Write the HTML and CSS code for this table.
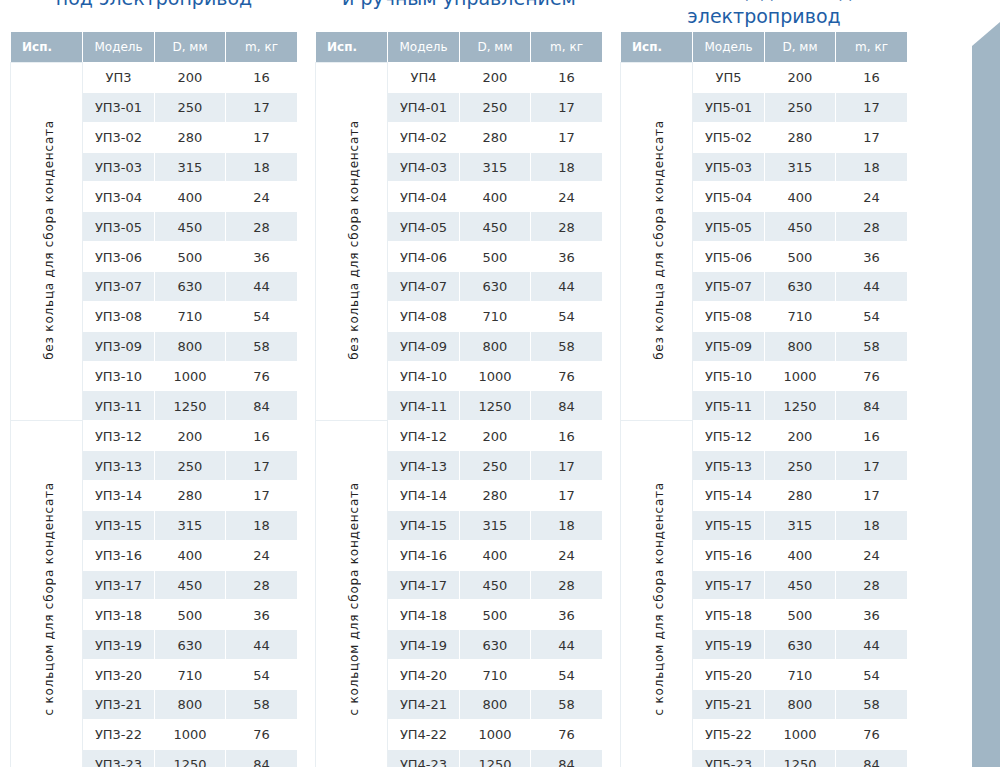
FILE: index.html
```html
<!DOCTYPE html>
<html lang="ru">
<head>
<meta charset="utf-8">
<title>Узлы прохода</title>
<link rel="stylesheet" href="styles.css">
</head>
<body>
<div class="deco"></div>
<main class="cols">
  <section class="col">
    <h2 class="title title-up">Узел прохода УП3<br>под электропривод</h2>
    <table class="spec">
      <colgroup><col class="c1"><col class="c2"><col class="c3"><col class="c4"></colgroup>
      <thead><tr><th class="isp">Исп.</th><th>Модель</th><th>D, мм</th><th>m, кг</th></tr></thead>
      <tbody>
        <tr><td class="grp" rowspan="12"><span>без кольца для сбора конденсата</span></td><td>УП3</td><td>200</td><td>16</td></tr>
        <tr><td>УП3-01</td><td>250</td><td>17</td></tr>
        <tr><td>УП3-02</td><td>280</td><td>17</td></tr>
        <tr><td>УП3-03</td><td>315</td><td>18</td></tr>
        <tr><td>УП3-04</td><td>400</td><td>24</td></tr>
        <tr><td>УП3-05</td><td>450</td><td>28</td></tr>
        <tr><td>УП3-06</td><td>500</td><td>36</td></tr>
        <tr><td>УП3-07</td><td>630</td><td>44</td></tr>
        <tr><td>УП3-08</td><td>710</td><td>54</td></tr>
        <tr><td>УП3-09</td><td>800</td><td>58</td></tr>
        <tr><td>УП3-10</td><td>1000</td><td>76</td></tr>
        <tr><td>УП3-11</td><td>1250</td><td>84</td></tr>
        <tr><td class="grp" rowspan="12"><span>с кольцом для сбора конденсата</span></td><td>УП3-12</td><td>200</td><td>16</td></tr>
        <tr><td>УП3-13</td><td>250</td><td>17</td></tr>
        <tr><td>УП3-14</td><td>280</td><td>17</td></tr>
        <tr><td>УП3-15</td><td>315</td><td>18</td></tr>
        <tr><td>УП3-16</td><td>400</td><td>24</td></tr>
        <tr><td>УП3-17</td><td>450</td><td>28</td></tr>
        <tr><td>УП3-18</td><td>500</td><td>36</td></tr>
        <tr><td>УП3-19</td><td>630</td><td>44</td></tr>
        <tr><td>УП3-20</td><td>710</td><td>54</td></tr>
        <tr><td>УП3-21</td><td>800</td><td>58</td></tr>
        <tr><td>УП3-22</td><td>1000</td><td>76</td></tr>
        <tr><td>УП3-23</td><td>1250</td><td>84</td></tr>
      </tbody>
    </table>
  </section>
  <section class="col">
    <h2 class="title title-up">Узел прохода УП4 с клапаном<br>и ручным управлением</h2>
    <table class="spec">
      <colgroup><col class="c1"><col class="c2"><col class="c3"><col class="c4"></colgroup>
      <thead><tr><th class="isp">Исп.</th><th>Модель</th><th>D, мм</th><th>m, кг</th></tr></thead>
      <tbody>
        <tr><td class="grp" rowspan="12"><span>без кольца для сбора конденсата</span></td><td>УП4</td><td>200</td><td>16</td></tr>
        <tr><td>УП4-01</td><td>250</td><td>17</td></tr>
        <tr><td>УП4-02</td><td>280</td><td>17</td></tr>
        <tr><td>УП4-03</td><td>315</td><td>18</td></tr>
        <tr><td>УП4-04</td><td>400</td><td>24</td></tr>
        <tr><td>УП4-05</td><td>450</td><td>28</td></tr>
        <tr><td>УП4-06</td><td>500</td><td>36</td></tr>
        <tr><td>УП4-07</td><td>630</td><td>44</td></tr>
        <tr><td>УП4-08</td><td>710</td><td>54</td></tr>
        <tr><td>УП4-09</td><td>800</td><td>58</td></tr>
        <tr><td>УП4-10</td><td>1000</td><td>76</td></tr>
        <tr><td>УП4-11</td><td>1250</td><td>84</td></tr>
        <tr><td class="grp" rowspan="12"><span>с кольцом для сбора конденсата</span></td><td>УП4-12</td><td>200</td><td>16</td></tr>
        <tr><td>УП4-13</td><td>250</td><td>17</td></tr>
        <tr><td>УП4-14</td><td>280</td><td>17</td></tr>
        <tr><td>УП4-15</td><td>315</td><td>18</td></tr>
        <tr><td>УП4-16</td><td>400</td><td>24</td></tr>
        <tr><td>УП4-17</td><td>450</td><td>28</td></tr>
        <tr><td>УП4-18</td><td>500</td><td>36</td></tr>
        <tr><td>УП4-19</td><td>630</td><td>44</td></tr>
        <tr><td>УП4-20</td><td>710</td><td>54</td></tr>
        <tr><td>УП4-21</td><td>800</td><td>58</td></tr>
        <tr><td>УП4-22</td><td>1000</td><td>76</td></tr>
        <tr><td>УП4-23</td><td>1250</td><td>84</td></tr>
      </tbody>
    </table>
  </section>
  <section class="col">
    <h2 class="title">Узел прохода УП5 с клапаном<br>и площадкой под<br>электропривод</h2>
    <table class="spec">
      <colgroup><col class="c1"><col class="c2"><col class="c3"><col class="c4"></colgroup>
      <thead><tr><th class="isp">Исп.</th><th>Модель</th><th>D, мм</th><th>m, кг</th></tr></thead>
      <tbody>
        <tr><td class="grp" rowspan="12"><span>без кольца для сбора конденсата</span></td><td>УП5</td><td>200</td><td>16</td></tr>
        <tr><td>УП5-01</td><td>250</td><td>17</td></tr>
        <tr><td>УП5-02</td><td>280</td><td>17</td></tr>
        <tr><td>УП5-03</td><td>315</td><td>18</td></tr>
        <tr><td>УП5-04</td><td>400</td><td>24</td></tr>
        <tr><td>УП5-05</td><td>450</td><td>28</td></tr>
        <tr><td>УП5-06</td><td>500</td><td>36</td></tr>
        <tr><td>УП5-07</td><td>630</td><td>44</td></tr>
        <tr><td>УП5-08</td><td>710</td><td>54</td></tr>
        <tr><td>УП5-09</td><td>800</td><td>58</td></tr>
        <tr><td>УП5-10</td><td>1000</td><td>76</td></tr>
        <tr><td>УП5-11</td><td>1250</td><td>84</td></tr>
        <tr><td class="grp" rowspan="12"><span>с кольцом для сбора конденсата</span></td><td>УП5-12</td><td>200</td><td>16</td></tr>
        <tr><td>УП5-13</td><td>250</td><td>17</td></tr>
        <tr><td>УП5-14</td><td>280</td><td>17</td></tr>
        <tr><td>УП5-15</td><td>315</td><td>18</td></tr>
        <tr><td>УП5-16</td><td>400</td><td>24</td></tr>
        <tr><td>УП5-17</td><td>450</td><td>28</td></tr>
        <tr><td>УП5-18</td><td>500</td><td>36</td></tr>
        <tr><td>УП5-19</td><td>630</td><td>44</td></tr>
        <tr><td>УП5-20</td><td>710</td><td>54</td></tr>
        <tr><td>УП5-21</td><td>800</td><td>58</td></tr>
        <tr><td>УП5-22</td><td>1000</td><td>76</td></tr>
        <tr><td>УП5-23</td><td>1250</td><td>84</td></tr>
      </tbody>
    </table>
  </section>
</main>
</body>
</html>
```
FILE: styles.css
```css
html, body {
  margin: 0;
  padding: 0;
  background: #ffffff;
}
body {
  font-family: "DejaVu Sans", "Open Sans", sans-serif;
  color: #333333;
  overflow: hidden;
}
.deco {
  position: absolute;
  top: 22px;
  right: 0;
  width: 28px;
  height: 760px;
  background: #a1b6c5;
  clip-path: polygon(0 24px, 100% 0, 100% 100%, 0 100%);
}
.cols {
  display: flex;
  gap: 17px;
  padding-left: 10px;
  margin-top: -51px;
}
.col {
  display: flex;
  flex-direction: column;
  width: 288px;
}
.title {
  height: 80px;
  margin: 0 0 2px;
  display: flex;
  flex-direction: column;
  justify-content: flex-end;
  text-align: center;
  font-size: 19px;
  line-height: 25px;
  font-weight: normal;
  color: #1e5ea6;
}
.title-up {
  padding-bottom: 18px;
  box-sizing: border-box;
}
.spec {
  border-collapse: separate;
  border-spacing: 1px;
  table-layout: fixed;
  width: 288px;
  font-size: 13px;
}
.c1, .c2, .c4 { width: 71px; }
.c3 { width: 70px; }
.spec th {
  background: #a1b5c4;
  color: #ffffff;
  font-weight: normal;
  font-size: 12px;
  height: 30px;
  padding: 0;
  text-align: center;
}
.spec th.isp {
  text-align: left;
  padding-left: 11px;
  font-weight: bold;
}
.spec td {
  height: 28.86px;
  padding: 0;
  padding-top: 1px;
  text-align: center;
  background: #ffffff;
  color: #333333;
  box-sizing: border-box;
}
.spec tbody tr:nth-child(even) td {
  background: #e6edf2;
}
.spec td.grp,
.spec tbody tr:nth-child(even) td.grp {
  background: #ffffff;
  box-shadow: 0 0 0 1px #e8eef2;
  vertical-align: middle;
  padding: 0 0 0 4px;
}
.grp span {
  display: inline-block;
  writing-mode: vertical-rl;
  transform: rotate(180deg);
  font-size: 12px;
  letter-spacing: 0.8px;
  white-space: nowrap;
  color: #222222;
}
```
